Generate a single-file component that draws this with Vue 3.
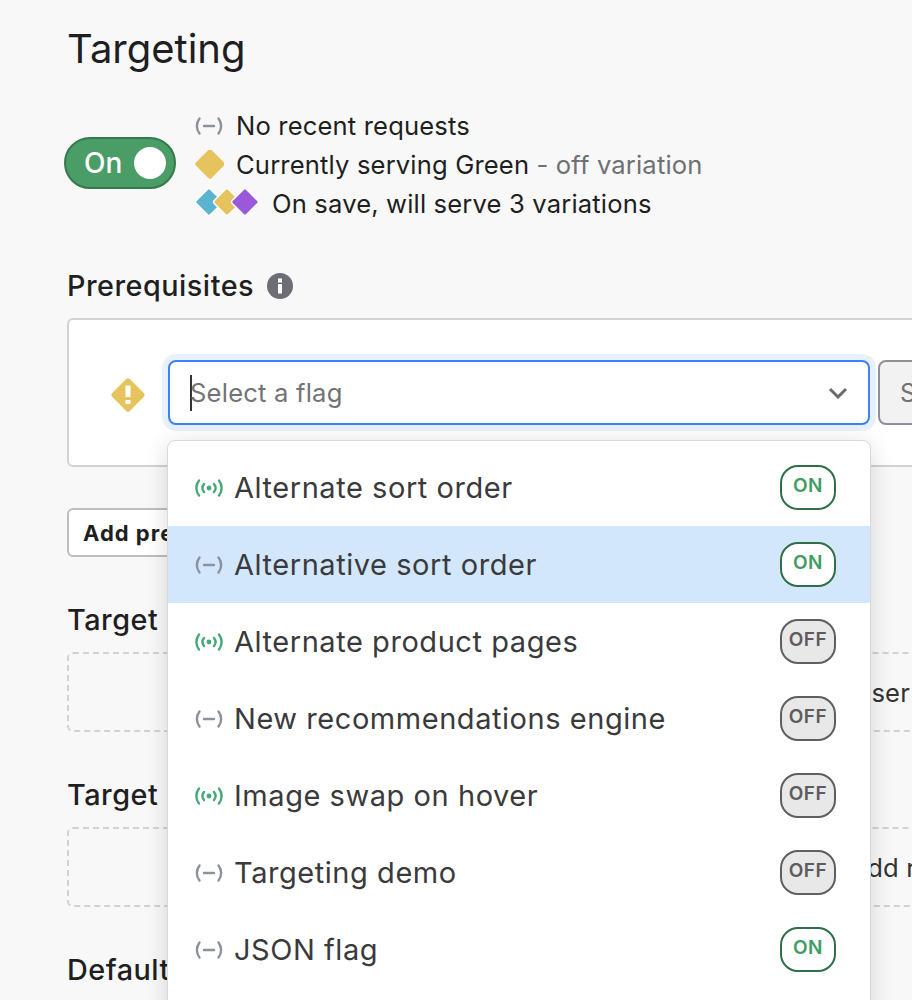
<template>
  <div class="page">
    <div class="inner">
      <h1 class="title">Targeting</h1>

      <div class="status">
        <div class="toggle">
          <span>On</span>
          <i class="knob"></i>
        </div>
        <div class="status-lines">
          <div class="line">
            <svg class="ico" viewBox="0 0 30 20"><use href="#idle" /></svg>
            <span>No recent requests</span>
          </div>
          <div class="line">
            <svg class="ico" viewBox="0 0 30 30"><rect x="5" y="3" width="22" height="22" rx="2" fill="#e6c35c" transform="rotate(45 16 14)" /></svg>
            <span>Currently serving Green <em>- off variation</em></span>
          </div>
          <div class="line">
            <svg class="ico-multi" viewBox="0 0 66 32">
              <rect x="5" y="4" width="20" height="20" rx="2" fill="#5ab3d1" stroke="#fff" stroke-width="1.5" transform="rotate(45 15 14)" />
              <rect x="23" y="4" width="20" height="20" rx="2" fill="#e6c35c" stroke="#fff" stroke-width="1.5" transform="rotate(45 33 14)" />
              <rect x="41" y="4" width="20" height="20" rx="2" fill="#9b59d9" stroke="#fff" stroke-width="1.5" transform="rotate(45 51 14)" />
            </svg>
            <span>On save, will serve 3 variations</span>
          </div>
        </div>
      </div>

      <h2 class="heading prereq-heading">
        Prerequisites
        <svg class="info" viewBox="0 0 26 26">
          <circle cx="13" cy="13" r="13" fill="#6c6d75" />
          <rect x="11" y="5.5" width="4" height="4" fill="#fff" />
          <rect x="11" y="11" width="4" height="9.5" fill="#fff" />
        </svg>
      </h2>

      <div class="card">
        <svg class="warn" viewBox="0 0 36 36">
          <rect x="5.5" y="5.5" width="25" height="25" rx="2.5" fill="#e6c35c" transform="rotate(45 18 18)" />
          <rect x="15.5" y="8.5" width="5" height="11.5" fill="#fff" />
          <rect x="15.5" y="23" width="5" height="4" fill="#fff" />
        </svg>
        <div class="select-wrap">
          <div class="select">
            <i class="caret"></i>
            <span class="placeholder">Select a flag</span>
            <svg class="chevron" viewBox="0 0 20 12"><path d="M2 2l8 8 8-8" fill="none" stroke="#6a6a6d" stroke-width="3" /></svg>
          </div>
          <ul class="menu">
            <li v-for="flag in flags" :key="flag.name" class="option" :class="{ active: flag.active }">
              <svg class="ico-option" viewBox="0 0 30 20">
                <use :href="flag.live ? '#live' : '#idle'" />
              </svg>
              <span class="option-name">{{ flag.name }}</span>
              <span class="pill" :class="flag.on ? 'pill-on' : 'pill-off'">{{ flag.on ? 'ON' : 'OFF' }}</span>
            </li>
          </ul>
        </div>
        <div class="save-btn">Save</div>
      </div>

      <button class="add-btn">Add prerequisites</button>

      <h2 class="heading">Target users</h2>
      <div class="dashed">Add user targets</div>

      <h2 class="heading">Target segments</h2>
      <div class="dashed">Add rule</div>

      <h2 class="heading">Default rule</h2>
    </div>

    <svg width="0" height="0" class="defs">
      <defs>
        <g id="idle" fill="none" stroke="#8b929c" stroke-width="2.4" stroke-linecap="round">
          <path d="M5.5 2.5C2 7 2 13 5.5 17.5" />
          <path d="M24.5 2.5C28 7 28 13 24.5 17.5" />
          <path d="M10 10h10" />
        </g>
        <g id="live" fill="none" stroke="#45a877" stroke-width="2.4" stroke-linecap="round">
          <path d="M5 2.5C1.5 7 1.5 13 5 17.5" />
          <path d="M25 2.5C28.5 7 28.5 13 25 17.5" />
          <path d="M10 6C8 8.5 8 11.5 10 14" />
          <path d="M20 6C22 8.5 22 11.5 20 14" />
          <circle cx="15" cy="10" r="2.4" fill="#45a877" stroke="none" />
        </g>
      </defs>
    </svg>
  </div>
</template>

<script setup>
const flags = [
  { name: 'Alternate sort order', live: true, on: true },
  { name: 'Alternative sort order', live: false, on: true, active: true },
  { name: 'Alternate product pages', live: true, on: false },
  { name: 'New recommendations engine', live: false, on: false },
  { name: 'Image swap on hover', live: true, on: false },
  { name: 'Targeting demo', live: false, on: false },
  { name: 'JSON flag', live: false, on: true },
  { name: 'Dark mode', live: true, on: true }
]
</script>

<style>
html, body {
  margin: 0;
  overflow: hidden;
  background: #f8f8f8;
}
</style>

<style scoped>
.page {
  width: 912px;
  height: 1000px;
  overflow: hidden;
  background: #f8f8f8;
  font-family: Inter, "Liberation Sans", sans-serif;
  color: #1f1f21;
}
.inner {
  width: 1668px;
  padding: 25px 0 0 67px;
}
.defs {
  position: absolute;
}
.title {
  margin: 0;
  font-size: 40px;
  line-height: 48px;
  font-weight: 400;
}
.status {
  display: flex;
  align-items: center;
  margin-top: 33px;
  margin-left: -3px;
  gap: 18px;
}
.toggle {
  box-sizing: border-box;
  width: 112px;
  height: 52px;
  margin-bottom: 4px;
  border: 2px solid #357a4d;
  border-radius: 26px;
  background: #4a9d66;
  color: #fff;
  font-size: 28px;
  font-weight: 500;
  display: flex;
  align-items: center;
  justify-content: space-between;
  padding: 0 8px 0 18px;
}
.knob {
  width: 32px;
  height: 32px;
  border-radius: 50%;
  background: #fff;
}
.status-lines {
  font-size: 25.6px;
  letter-spacing: 0.15px;
}
.line {
  display: flex;
  align-items: center;
  height: 39px;
}
.line em {
  font-style: normal;
  color: #6f7074;
}
.ico {
  width: 30px;
  height: 30px;
  margin-right: 12px;
}
.ico-multi {
  width: 66px;
  height: 32px;
  margin-right: 12px;
}
.heading {
  margin: 0;
  font-size: 28.8px;
  line-height: 36px;
  font-weight: 450;
  letter-spacing: 0.5px;
}
.prereq-heading {
  display: flex;
  align-items: center;
  gap: 13px;
  margin-top: 45px;
}
.info {
  width: 26px;
  height: 26px;
}
.card {
  box-sizing: border-box;
  height: 149px;
  margin-top: 14px;
  border: 2px solid #d2d2d2;
  border-radius: 6px;
  background: #fff;
  display: flex;
  align-items: center;
  padding: 0 0 0 41px;
}
.warn {
  width: 36px;
  height: 36px;
  margin-right: 22px;
  margin-top: 4px;
}
.select-wrap {
  position: relative;
  width: 702px;
  margin-right: 8px;
}
.select {
  box-sizing: border-box;
  height: 65px;
  border: 2px solid #3b82f6;
  border-radius: 8px;
  background: #fff;
  box-shadow: 0 0 0 6px #e9f0fd;
  display: flex;
  align-items: center;
  padding: 0 20px 0 20px;
  font-size: 25.6px;
  letter-spacing: 0.2px;
  color: #737377;
}
.caret {
  width: 2px;
  height: 36px;
  background: #333;
  margin-right: -2px;
}
.placeholder {
  flex: 1;
}
.chevron {
  width: 20px;
  height: 12px;
}
.menu {
  position: absolute;
  top: 80px;
  left: -1px;
  width: 704px;
  box-sizing: border-box;
  margin: 0;
  padding: 8px 0;
  list-style: none;
  background: #fff;
  border: 1px solid #d8d8d8;
  border-radius: 8px;
  box-shadow: 0 4px 24px rgba(0, 0, 0, 0.14);
}
.option {
  height: 77px;
  display: flex;
  align-items: center;
  padding: 0 34px 0 26px;
  font-size: 29px;
  letter-spacing: 0.55px;
  color: #3a3a3c;
}
.option.active {
  background: #d3e7fc;
}
.ico-option {
  width: 30px;
  height: 20px;
  margin-right: 10px;
}
.option-name {
  flex: 1;
}
.pill {
  box-sizing: border-box;
  width: 56px;
  height: 45px;
  border: 2px solid;
  border-radius: 18px;
  display: flex;
  align-items: center;
  justify-content: center;
  padding-bottom: 4px;
  font-size: 19px;
  font-weight: 600;
  letter-spacing: 0.5px;
}
.pill-on {
  border-color: #2f6f47;
  color: #3f9c63;
  background: #fff;
}
.pill-off {
  border-color: #5f5f60;
  color: #5c5c5e;
  background: #e8e8e8;
}
.save-btn {
  box-sizing: border-box;
  width: 300px;
  height: 65px;
  border: 2px solid #8e9097;
  border-radius: 8px;
  background: #f2f2f2;
  color: #737377;
  font-size: 25px;
  display: flex;
  align-items: center;
  padding-left: 20px;
}
.add-btn {
  display: block;
  box-sizing: border-box;
  height: 49px;
  margin-top: 41px;
  padding: 0 14px;
  border: 2px solid #bdbdbd;
  border-radius: 6px;
  background: #fff;
  color: #1f1f21;
  font-family: inherit;
  font-size: 22px;
  font-weight: 700;
  letter-spacing: 1px;
}
.add-btn + .heading {
  margin-top: 45px;
}
.dashed {
  box-sizing: border-box;
  height: 80px;
  margin-top: 14px;
  margin-bottom: 45px;
  border: 2px dashed #d2d2d2;
  border-radius: 6px;
  display: flex;
  align-items: center;
  justify-content: center;
  font-size: 25.6px;
  letter-spacing: 0.15px;
  color: #333;
}
</style>
